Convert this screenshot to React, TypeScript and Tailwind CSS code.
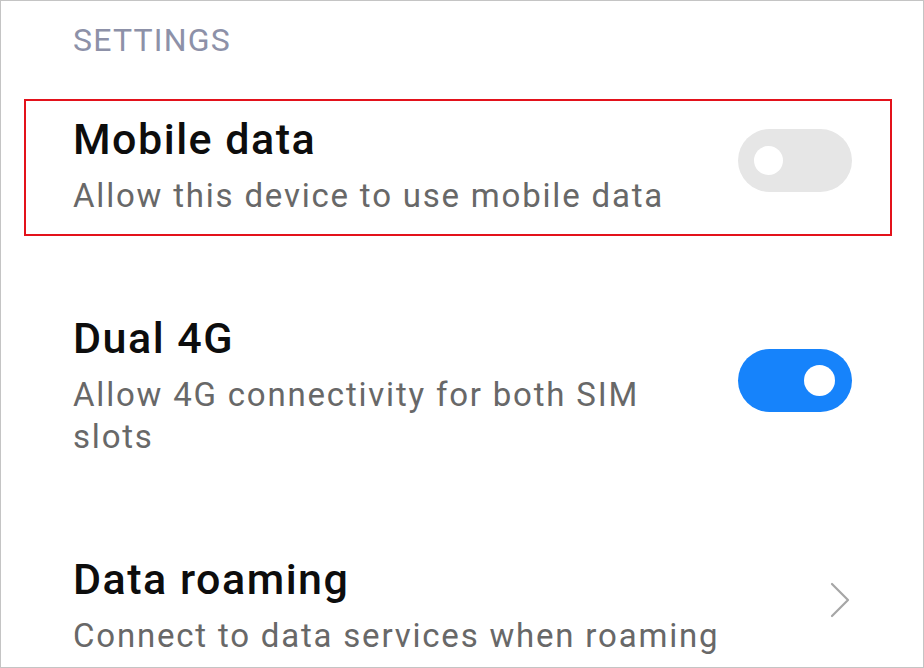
import React from 'react';

const font = { fontFamily: 'Roboto, "Noto Sans", Arial, sans-serif' };

const Toggle = ({ on }: { on: boolean }) => (
  <div
    className={
      on
        ? 'w-[114px] h-[63px] rounded-full bg-[#1683fb] flex items-center justify-end pr-[17px] shrink-0'
        : 'w-[114px] h-[63px] rounded-full bg-[#e6e6e6] flex items-center justify-start pl-[16px] shrink-0'
    }
  >
    <div className={on ? 'w-[31px] h-[31px] rounded-full bg-white' : 'w-[29px] h-[29px] rounded-full bg-white'} />
  </div>
);

const Chevron = () => (
  <div className="flex justify-end pr-[2px] shrink-0">
    <svg width="20" height="36" viewBox="0 0 20 36" fill="none">
      <path d="M2 2 L18 18 L2 34" stroke="#a6a6a6" strokeWidth="2.2" strokeLinecap="round" strokeLinejoin="round" />
    </svg>
  </div>
);

const Row = ({ title, subtitle, right }: { title: string; subtitle: string; right: React.ReactNode }) => (
  <div className="flex items-center gap-[46px]">
    <div className="flex-1 min-w-0">
      <div className="text-[43px] leading-[52px] font-medium text-[#0d0d0d] tracking-[1.5px]">{title}</div>
      <div className="text-[33px] leading-[42px] text-[#686868] mt-[10px] tracking-[1.8px]">{subtitle}</div>
    </div>
    <div className="mb-[10px] shrink-0">{right}</div>
  </div>
);

export default function App() {
  return (
    <div className="w-[924px] h-[668px] border border-[#c4c4c4] bg-white overflow-hidden" style={font}>
      <div className="pl-[72px] pt-[19px] text-[32px] leading-[40px] text-[#8d91a8] tracking-[1.2px]">SETTINGS</div>

      <div className="mt-[39px] ml-[23px] w-[868px] h-[137px] border-2 border-[#e3121b] pl-[47px] pr-[38px] pt-[12px]">
        <Row title="Mobile data" subtitle="Allow this device to use mobile data" right={<Toggle on={false} />} />
      </div>

      <div className="pl-[72px] pr-[71px] mt-[76px]">
        <Row title="Dual 4G" subtitle="Allow 4G connectivity for both SIM slots" right={<Toggle on />} />
      </div>

      <div className="pl-[72px] pr-[71px] mt-[95px]">
        <Row title="Data roaming" subtitle="Connect to data services when roaming" right={<Chevron />} />
      </div>
    </div>
  );
}
